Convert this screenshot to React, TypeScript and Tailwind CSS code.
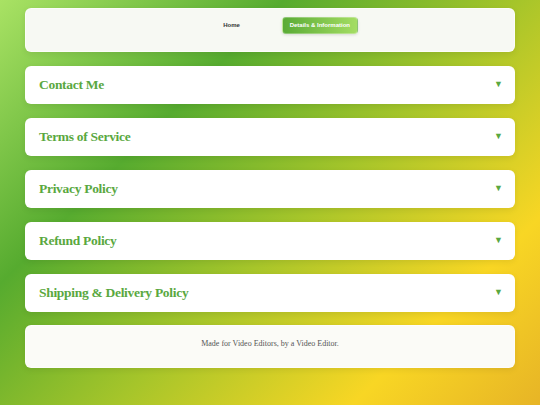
import React from "react";

const sections = [
  "Contact Me",
  "Terms of Service",
  "Privacy Policy",
  "Refund Policy",
  "Shipping & Delivery Policy",
];

const App: React.FC = () => {
  return (
    <div className="min-h-screen w-full bg-[linear-gradient(135deg,#a9e264_0%,#56ab2f_30%,#a6c52a_55%,#f8d624_80%,#e7b426_100%)] px-[25px] pt-[8px] pb-[38px]">
      <header className="h-[44px] rounded-md border border-white/60 bg-[#f7f9f3] pt-[8px] shadow-[0_2px_6px_rgba(0,0,0,0.08)]">
        <nav className="flex items-center justify-center pl-[33px] font-['Liberation_Sans',Arial,sans-serif]">
          <a className="px-[8px] text-[6px] font-bold text-[#333]">Home</a>
          <a className="ml-[34px] flex h-[17px] w-[76px] items-center justify-center rounded-[4px] border border-white/30 bg-[linear-gradient(90deg,#5aab35,#a4dd63)] text-[6px] font-bold text-white shadow-[0_1px_3px_rgba(0,0,0,0.12)]">
            Details &amp; Information
          </a>
        </nav>
      </header>

      <main className="mt-[14px] flex flex-col gap-[14px]">
        {sections.map((title) => (
          <div
            key={title}
            className="flex h-[38px] items-center justify-between rounded-md border border-white/70 bg-white px-[13px] shadow-[0_2px_6px_rgba(0,0,0,0.08)]"
          >
            <h2 className="font-['Liberation_Serif','Times_New_Roman',serif] text-[13.5px] font-bold tracking-[-0.3px] text-[#5aa83f]">
              {title}
            </h2>
            <span className="-mr-[2px] mb-[3px] text-[9px] leading-none text-[#5aa83f]">▼</span>
          </div>
        ))}
      </main>

      <footer className="mt-[13px] flex h-[43px] items-center justify-center rounded-md border border-white/60 bg-[#fbfbf7] pb-[5px] shadow-[0_2px_6px_rgba(0,0,0,0.08)]">
        <p className="font-['Liberation_Serif','Times_New_Roman',serif] text-[8px] text-[#555]">
          Made for Video Editors, by a Video Editor.
        </p>
      </footer>
    </div>
  );
};

export default App;
